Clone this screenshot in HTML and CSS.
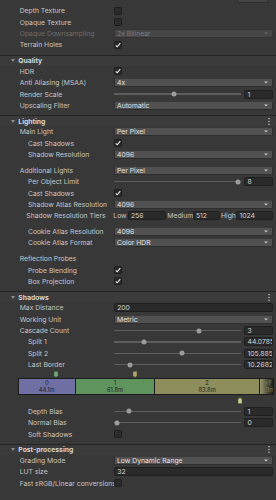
FILE: index.html
```html
<!DOCTYPE html>
<html lang="en">
<head>
    <meta charset="UTF-8">
    <meta name="viewport" content="width=device-width, initial-scale=1.0">
    <title>Pipeline Asset</title>
    <link rel="stylesheet" href="styles.css">
</head>
<body>

<div class="inspector">
    <div class="top-strip"><span class="top-btn"></span></div>

    <div class="prop"><span class="label">Depth Texture</span><div class="field"><span class="check"></span></div></div>
    <div class="prop"><span class="label">Opaque Texture</span><div class="field"><span class="check"></span></div></div>
    <div class="prop disabled"><span class="label">Opaque Downsampling</span><div class="field"><div class="popup">2x Bilinear<svg class="arrow" viewBox="0 0 4 3"><path d="M0 0.4H4L2 2.6Z"/></svg></div></div></div>
    <div class="prop"><span class="label">Terrain Holes</span><div class="field"><span class="check on"><svg viewBox="0 0 8 8"><path d="M1.7 4.3L3.2 5.8L6.3 2.2"/></svg></span></div></div>

    <!-- Quality -->
    <div class="section-head"><span class="fold"></span><span class="title">Quality</span></div>
    <div class="prop"><span class="label">HDR</span><div class="field"><span class="check on"><svg viewBox="0 0 8 8"><path d="M1.7 4.3L3.2 5.8L6.3 2.2"/></svg></span></div></div>
    <div class="prop"><span class="label">Anti Aliasing (MSAA)</span><div class="field"><div class="popup">4x<svg class="arrow" viewBox="0 0 4 3"><path d="M0 0.4H4L2 2.6Z"/></svg></div></div></div>
    <div class="prop"><span class="label">Render Scale</span><div class="field slider"><div class="track"><span class="thumb" style="left: 47.6%"></span></div><span class="num">1</span></div></div>
    <div class="prop"><span class="label">Upscaling Filter</span><div class="field"><div class="popup">Automatic<svg class="arrow" viewBox="0 0 4 3"><path d="M0 0.4H4L2 2.6Z"/></svg></div></div></div>

    <!-- Lighting -->
    <div class="section-head"><span class="fold"></span><span class="title">Lighting</span><svg class="kebab" viewBox="0 0 2 7"><rect x="0.4" y="0" width="1.2" height="1.2"/><rect x="0.4" y="2.9" width="1.2" height="1.2"/><rect x="0.4" y="5.8" width="1.2" height="1.2"/></svg></div>
    <div class="prop"><span class="label">Main Light</span><div class="field"><div class="popup">Per Pixel<svg class="arrow" viewBox="0 0 4 3"><path d="M0 0.4H4L2 2.6Z"/></svg></div></div></div>
    <div class="prop sub"><span class="label">Cast Shadows</span><div class="field"><span class="check on"><svg viewBox="0 0 8 8"><path d="M1.7 4.3L3.2 5.8L6.3 2.2"/></svg></span></div></div>
    <div class="prop sub"><span class="label">Shadow Resolution</span><div class="field"><div class="popup">4096<svg class="arrow" viewBox="0 0 4 3"><path d="M0 0.4H4L2 2.6Z"/></svg></div></div></div>
    <div class="spacer"></div>
    <div class="prop"><span class="label">Additional Lights</span><div class="field"><div class="popup">Per Pixel<svg class="arrow" viewBox="0 0 4 3"><path d="M0 0.4H4L2 2.6Z"/></svg></div></div></div>
    <div class="prop sub"><span class="label">Per Object Limit</span><div class="field slider"><div class="track"><span class="thumb" style="left: 98.2%"></span></div><span class="num">8</span></div></div>
    <div class="prop sub"><span class="label">Cast Shadows</span><div class="field"><span class="check on"><svg viewBox="0 0 8 8"><path d="M1.7 4.3L3.2 5.8L6.3 2.2"/></svg></span></div></div>
    <div class="prop sub"><span class="label">Shadow Atlas Resolution</span><div class="field"><div class="popup">4096<svg class="arrow" viewBox="0 0 4 3"><path d="M0 0.4H4L2 2.6Z"/></svg></div></div></div>
    <div class="prop tiers"><span class="label">Shadow Resolution Tiers</span>
        <div class="field tier-fields">
            <span class="tier-lab low">Low</span><span class="num t-low">256</span>
            <span class="tier-lab med">Medium</span><span class="num t-med">512</span>
            <span class="tier-lab high">High</span><span class="num t-high">1024</span>
        </div>
    </div>
    <div class="spacer"></div>
    <div class="prop sub"><span class="label">Cookie Atlas Resolution</span><div class="field"><div class="popup">4096<svg class="arrow" viewBox="0 0 4 3"><path d="M0 0.4H4L2 2.6Z"/></svg></div></div></div>
    <div class="prop sub"><span class="label">Cookie Atlas Format</span><div class="field"><div class="popup">Color HDR<svg class="arrow" viewBox="0 0 4 3"><path d="M0 0.4H4L2 2.6Z"/></svg></div></div></div>
    <div class="spacer"></div>
    <div class="prop"><span class="label">Reflection Probes</span></div>
    <div class="prop sub"><span class="label">Probe Blending</span><div class="field"><span class="check on"><svg viewBox="0 0 8 8"><path d="M1.7 4.3L3.2 5.8L6.3 2.2"/></svg></span></div></div>
    <div class="prop sub"><span class="label">Box Projection</span><div class="field"><span class="check on"><svg viewBox="0 0 8 8"><path d="M1.7 4.3L3.2 5.8L6.3 2.2"/></svg></span></div></div>

    <!-- Shadows -->
    <div class="section-head"><span class="fold"></span><span class="title">Shadows</span><svg class="kebab" viewBox="0 0 2 7"><rect x="0.4" y="0" width="1.2" height="1.2"/><rect x="0.4" y="2.9" width="1.2" height="1.2"/><rect x="0.4" y="5.8" width="1.2" height="1.2"/></svg></div>
    <div class="prop"><span class="label">Max Distance</span><div class="field"><span class="num wide">200</span></div></div>
    <div class="prop"><span class="label">Working Unit</span><div class="field"><div class="popup">Metric<svg class="arrow" viewBox="0 0 4 3"><path d="M0 0.4H4L2 2.6Z"/></svg></div></div></div>
    <div class="prop"><span class="label">Cascade Count</span><div class="field slider"><div class="track"><span class="thumb" style="left: 66.9%"></span></div><span class="num">3</span></div></div>
    <div class="prop sub"><span class="label">Split 1</span><div class="field slider"><div class="track"><span class="thumb" style="left: 23.7%"></span></div><span class="num">44.0785</span></div></div>
    <div class="prop sub"><span class="label">Split 2</span><div class="field slider"><div class="track"><span class="thumb" style="left: 53.4%"></span></div><span class="num">105.885</span></div></div>
    <div class="prop sub"><span class="label">Last Border</span><div class="field slider"><div class="track"><span class="thumb" style="left: 12.9%"></span></div><span class="num">10.2682</span></div></div>

    <div class="cascades">
        <svg class="pin" style="left: 56.3px" viewBox="0 0 5 7"><path d="M0.5 0.5H4.5V4.5L2.5 6.5L0.5 4.5Z" fill="#79a879" stroke="#3f5a3f" stroke-width="0.6"/></svg>
        <svg class="pin" style="left: 135px" viewBox="0 0 5 7"><path d="M0.5 0.5H4.5V4.5L2.5 6.5L0.5 4.5Z" fill="#abab74" stroke="#5a5a3c" stroke-width="0.6"/></svg>
        <div class="cascade-bar">
            <div class="seg c0" style="width: 22.05%"><span>0</span><span>44.1m</span></div>
            <div class="seg c1" style="width: 30.9%"><span>1</span><span>61.8m</span></div>
            <div class="seg c2" style="width: 41.9%"><span>2</span><span>83.8m</span></div>
            <div class="seg fade" style="width: 5.15%"><span>2+F</span><span>10.3m</span></div>
        </div>
        <svg class="pin bottom" style="left: 239.6px" viewBox="0 0 5 7"><path d="M0.5 6.5H4.5V2.5L2.5 0.5L0.5 2.5Z" fill="#cdcd96" stroke="#6a6a48" stroke-width="0.6"/></svg>
    </div>

    <div class="prop sub"><span class="label">Depth Bias</span><div class="field slider"><div class="track"><span class="thumb" style="left: 12.1%"></span></div><span class="num">1</span></div></div>
    <div class="prop sub"><span class="label">Normal Bias</span><div class="field slider"><div class="track"><span class="thumb" style="left: 2.1%"></span></div><span class="num">0</span></div></div>
    <div class="prop sub"><span class="label">Soft Shadows</span><div class="field"><span class="check"></span></div></div>

    <!-- Post-processing -->
    <div class="section-head"><span class="fold"></span><span class="title">Post-processing</span><svg class="kebab" viewBox="0 0 2 7"><rect x="0.4" y="0" width="1.2" height="1.2"/><rect x="0.4" y="2.9" width="1.2" height="1.2"/><rect x="0.4" y="5.8" width="1.2" height="1.2"/></svg></div>
    <div class="prop"><span class="label">Grading Mode</span><div class="field"><div class="popup">Low Dynamic Range<svg class="arrow" viewBox="0 0 4 3"><path d="M0 0.4H4L2 2.6Z"/></svg></div></div></div>
    <div class="prop"><span class="label">LUT size</span><div class="field"><span class="num wide">32</span></div></div>
    <div class="prop long"><span class="label">Fast sRGB/Linear conversions</span><div class="field"><span class="check"></span></div></div>
</div>

</body>
</html>
```

FILE: styles.css
```css
body {
    margin: 0;
    background-color: #383838;
    font-family: Inter, "Noto Sans", sans-serif;
    font-size: 6.8px;
    color: #c6c6c6;
}

.inspector {
    width: 276px;
}

.top-strip {
    height: 5px;
    display: flex;
    justify-content: flex-end;
    padding-right: 7.7px;
    box-sizing: border-box;
}

.top-btn {
    width: 31.6px;
    height: 3px;
    background-color: #444;
    border: 1px solid #2c2c2c;
    border-top: none;
    border-radius: 0 0 2px 2px;
    box-sizing: border-box;
}

/* property rows */
.prop {
    display: flex;
    align-items: center;
    height: 11.4px;
    padding-right: 3.3px;
}

.label {
    width: 114px;
    flex-shrink: 0;
    padding-left: 19.7px;
    box-sizing: border-box;
    white-space: nowrap;
    overflow: hidden;
}

/* long label runs under the checkbox, as in the editor */
.prop.long .label {
    overflow: visible;
}

.prop.long .check {
    position: relative;
}

.prop.sub .label {
    padding-left: 28px;
}

.prop.tiers .label {
    padding-left: 26.3px;
}

.prop.disabled .label {
    color: #6c6c6c;
}

.field {
    flex: 1;
    display: flex;
    align-items: center;
    height: 9px;
    min-width: 0;
}

.spacer {
    height: 4.3px;
}

/* checkbox */
.check {
    width: 8px;
    height: 8px;
    background-color: #2a2a2a;
    border: 1px solid #1d1d1d;
    border-radius: 1.5px;
    box-sizing: border-box;
    display: flex;
    align-items: center;
    justify-content: center;
}

.check svg {
    width: 8px;
    height: 8px;
    flex-shrink: 0;
    fill: none;
    stroke: #eeeeee;
    stroke-width: 1.1;
}

/* dropdown */
.popup {
    flex: 1;
    height: 9px;
    display: flex;
    align-items: center;
    padding-left: 2px;
    padding-right: 3.5px;
    background-color: #515151;
    border: 1px solid #2e2e2e;
    border-top-color: #3a3a3a;
    border-radius: 1.5px;
    box-sizing: border-box;
    color: #e2e2e2;
    white-space: nowrap;
}

.popup .arrow {
    width: 4px;
    height: 3px;
    margin-left: auto;
    fill: #c4c4c4;
}

.prop.disabled .popup {
    background-color: #464646;
    border-color: #353535;
    color: #7a7a7a;
}

.prop.disabled .popup .arrow {
    fill: #6a6a6a;
}

/* number / text fields */
.num {
    width: 28.4px;
    height: 9px;
    flex-shrink: 0;
    display: flex;
    align-items: center;
    padding-left: 2.2px;
    background-color: #2a2a2a;
    border: 1px solid #1f1f1f;
    border-radius: 1.5px;
    box-sizing: border-box;
    color: #d2d2d2;
    white-space: nowrap;
    overflow: hidden;
}

.num.wide {
    flex: 1;
}

/* slider */
.slider {
    gap: 3.6px;
}

.track {
    flex: 1;
    height: 1.4px;
    background-color: #5e5e5e;
    position: relative;
}

.thumb {
    position: absolute;
    top: 50%;
    width: 5px;
    height: 5px;
    border-radius: 50%;
    background-color: #9c9c9c;
    transform: translate(-50%, -50%);
}

/* shadow resolution tiers */
.tier-fields {
    margin-left: -0.7px;
}

.tier-lab {
    white-space: nowrap;
}

.tier-lab.low { width: 14.4px; }
.tier-lab.med { width: 25.4px; margin-left: 1.6px; }
.tier-lab.high { width: 15.3px; margin-left: 1px; }

.num.t-low { width: 38px; }
.num.t-med { width: 27.3px; }
.num.t-high { flex: 1; }

/* section headers */
.section-head {
    display: flex;
    align-items: center;
    height: 10px;
    margin-top: 4px;
    padding-left: 11px;
    padding-right: 5.6px;
    border-top: 1px solid #242424;
    background-color: #3b3b3b;
    font-weight: bold;
    color: #d6d6d6;
}

.fold {
    width: 0;
    height: 0;
    border-left: 2px solid transparent;
    border-right: 2px solid transparent;
    border-top: 3px solid #8c8c8c;
    margin-right: 3.3px;
}

.kebab {
    width: 2px;
    height: 7px;
    margin-left: auto;
    fill: #d0d0d0;
}

/* cascade split bar */
.cascades {
    position: relative;
    height: 35.2px;
    padding-top: 7.6px;
    box-sizing: border-box;
}

.cascade-bar {
    display: flex;
    height: 17px;
    margin-left: 17.7px;
    width: 256.3px;
    border: 1px solid #1c1c1c;
    box-sizing: border-box;
    background-color: #1c1c1c;
    gap: 1px;
}

.seg {
    display: flex;
    flex-direction: column;
    align-items: center;
    justify-content: center;
    font-size: 5.8px;
    line-height: 6.6px;
    color: #232323;
    overflow: hidden;
    white-space: nowrap;
}

.seg.c0 { background-color: #6f6fa4; }
.seg.c1 { background-color: #5f945f; }
.seg.c2 { background-color: #8e8e5d; flex: 1; }
.seg.fade {
    background: linear-gradient(to right, #9a9a6c, #4a4a34 60%, #202018);
    color: #7d7d66;
}

.pin {
    position: absolute;
    top: 1px;
    width: 5px;
    height: 7px;
    transform: translateX(-2.5px);
}

.pin.bottom {
    top: 26.2px;
}
```
